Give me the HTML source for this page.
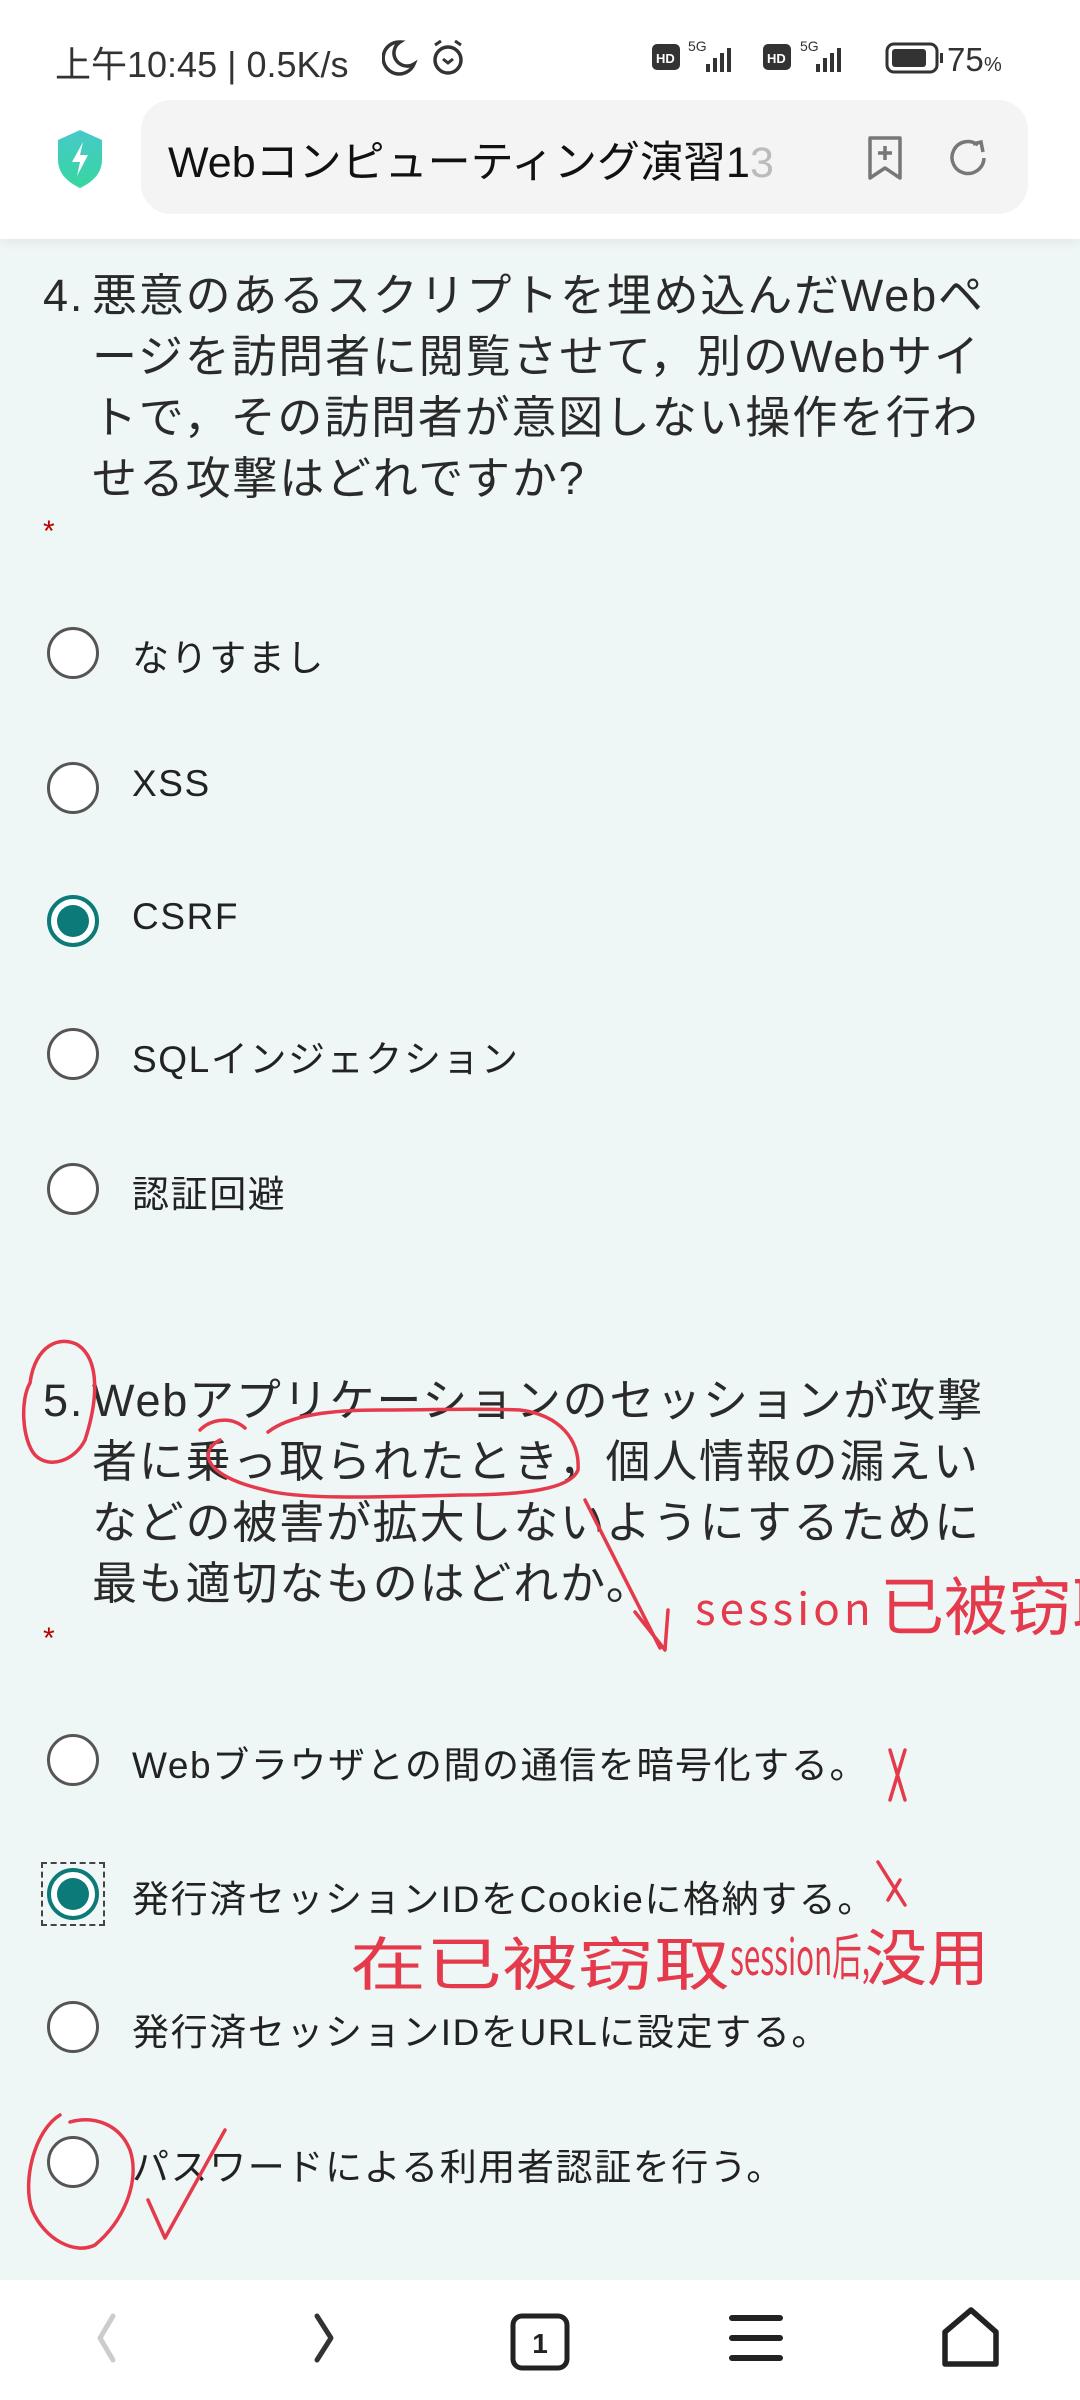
<!DOCTYPE html>
<html><head><meta charset="utf-8">
<style>
*{margin:0;padding:0;box-sizing:border-box}
body{width:1080px;height:2400px;background:#eff6f6;font-family:"Liberation Sans","Noto Sans CJK JP",sans-serif;color:#222;position:relative;overflow:hidden}
.abs{position:absolute;white-space:nowrap}
#hdr{position:absolute;left:0;top:0;width:1080px;height:239px;background:#fff;box-shadow:0 4px 10px rgba(0,0,0,.06)}
.q{font-size:45px;letter-spacing:1.8px;color:#2a2a2a;line-height:61px}
.opt{font-size:37px;color:#222;letter-spacing:1.6px}
.rad{position:absolute;left:47px;width:52px;height:52px;border-radius:50%;border:3px solid #555;background:#fff}
.sel{border:4px solid #0b7a78;background:#fff}
.sel::after{content:"";position:absolute;left:6px;top:6px;width:32px;height:32px;border-radius:50%;background:#0b7a78}
.star{color:#b00;font-size:30px}
#nav{position:absolute;left:0;top:2280px;width:1080px;height:120px;background:#fff}
</style></head><body>
<div id="hdr">
 <div class="abs" style="left:55px;top:36px;font-size:36px;color:#333">上午10:45 | 0.5K/s</div>
 <svg class="abs" style="left:382px;top:38px" width="90" height="40" viewBox="0 0 90 40">
  <path d="M18 4a16 16 0 1 0 14 22A13 13 0 0 1 18 4z" fill="none" stroke="#333" stroke-width="3.5"/>
  <circle cx="66" cy="22" r="13" fill="none" stroke="#333" stroke-width="3.5"/>
  <path d="M61 21l5 4 5-4M53 7l6-4M79 7l-6-4" fill="none" stroke="#333" stroke-width="3"/>
 </svg>
 <svg class="abs" style="left:650px;top:36px" width="370" height="44" viewBox="0 0 370 44">
  <rect x="2" y="8" width="28" height="26" rx="5" fill="#333"/><text x="6" y="27" font-size="13" fill="#fff" font-family="Liberation Sans" font-weight="bold">HD</text>
  <text x="38" y="15" font-size="14" fill="#333" font-family="Liberation Sans">5G</text>
  <rect x="56" y="28" width="4" height="8" fill="#333"/><rect x="63" y="22" width="4" height="14" fill="#333"/><rect x="70" y="17" width="4" height="19" fill="#333"/><rect x="77" y="12" width="4" height="24" fill="#333"/>
  <rect x="113" y="8" width="28" height="26" rx="5" fill="#333"/><text x="117" y="27" font-size="13" fill="#fff" font-family="Liberation Sans" font-weight="bold">HD</text>
  <text x="150" y="15" font-size="14" fill="#333" font-family="Liberation Sans">5G</text>
  <rect x="166" y="28" width="4" height="8" fill="#333"/><rect x="173" y="22" width="4" height="14" fill="#333"/><rect x="180" y="17" width="4" height="19" fill="#333"/><rect x="187" y="12" width="4" height="24" fill="#333"/>
  <rect x="237" y="8" width="50" height="28" rx="7" fill="none" stroke="#333" stroke-width="3"/><rect x="242" y="13" width="34" height="18" rx="3" fill="#333"/><rect x="290" y="17" width="3" height="10" fill="#333"/>
  <text x="297" y="35" font-size="33" fill="#333" font-family="Liberation Sans">75</text><text x="334" y="35" font-size="20" fill="#333" font-family="Liberation Sans">%</text>
 </svg>
 <svg class="abs" style="left:55px;top:128px" width="50" height="62" viewBox="0 0 50 62">
  <defs><linearGradient id="g" x1="0" y1="0" x2="0" y2="1"><stop offset="0" stop-color="#48c9c9"/><stop offset="1" stop-color="#36d6a0"/></linearGradient></defs>
  <path d="M25 2L47 12V32C47 46 36 55 25 60C14 55 3 46 3 32V12Z" fill="url(#g)"/>
  <path d="M28 14L17 34H25L22 48L33 27H25Z" fill="#fff"/>
 </svg>
 <div class="abs" style="left:141px;top:100px;width:887px;height:114px;border-radius:30px;background:#f4f4f4"></div>
 <div class="abs" style="left:168px;top:128px;font-size:43px;color:#111">Webコンピューティング演習1<span style="color:#bbb">3</span></div>
 <svg class="abs" style="left:865px;top:133px" width="40" height="50" viewBox="0 0 40 50">
  <path d="M5 5H35V45L20 35L5 45Z" fill="none" stroke="#777" stroke-width="3.5" stroke-linejoin="round"/>
  <path d="M20 13V27M13 20H27" stroke="#777" stroke-width="3.5"/>
 </svg>
 <svg class="abs" style="left:945px;top:135px" width="46" height="46" viewBox="0 0 46 46">
  <path d="M33 10A16 16 0 1 0 39 23" fill="none" stroke="#777" stroke-width="3.5"/>
  <path d="M28 9L36 7L38 17" fill="none" stroke="#777" stroke-width="3.5"/>
 </svg>
</div>

<div class="abs q" style="left:43px;top:265px">4.</div>
<div class="abs q" style="left:92px;top:265px">悪意のあるスクリプトを埋め込んだWebペ<br>ージを訪問者に閲覧させて，別のWebサイ<br>トで，その訪問者が意図しない操作を行わ<br>せる攻撃はどれですか?</div>
<div class="abs star" style="left:43px;top:515px">*</div>

<div class="rad" style="top:627px"></div><div class="abs opt" style="left:132px;top:628px">なりすまし</div>
<div class="rad" style="top:762px"></div><div class="abs opt" style="left:132px;top:763px">XSS</div>
<div class="rad sel" style="top:895px"></div><div class="abs opt" style="left:132px;top:896px">CSRF</div>
<div class="rad" style="top:1028px"></div><div class="abs opt" style="left:132px;top:1029px">SQLインジェクション</div>
<div class="rad" style="top:1163px"></div><div class="abs opt" style="left:132px;top:1164px">認証回避</div>

<div class="abs q" style="left:43px;top:1370px">5.</div>
<div class="abs q" style="left:92px;top:1370px">Webアプリケーションのセッションが攻撃<br>者に乗っ取られたとき，個人情報の漏えい<br>などの被害が拡大しないようにするために<br>最も適切なものはどれか。</div>
<div class="abs star" style="left:43px;top:1622px">*</div>

<div class="rad" style="top:1734px"></div><div class="abs opt" style="left:132px;top:1735px">Webブラウザとの間の通信を暗号化する。</div>
<div class="abs" style="left:41px;top:1862px;width:64px;height:64px;border:2px dashed #444"></div>
<div class="rad sel" style="top:1868px"></div><div class="abs opt" style="left:132px;top:1869px">発行済セッションIDをCookieに格納する。</div>
<div class="rad" style="top:2001px"></div><div class="abs opt" style="left:132px;top:2002px">発行済セッションIDをURLに設定する。</div>
<div class="rad" style="top:2136px"></div><div class="abs opt" style="left:132px;top:2137px">パスワードによる利用者認証を行う。</div>

<svg class="abs" style="left:0;top:0" width="1080" height="2400" viewBox="0 0 1080 2400">
 <g fill="none" stroke="#e43a4c" stroke-width="3.5" stroke-linecap="round" stroke-linejoin="round">
  <path d="M30 1383C20 1400 22 1440 35 1455C50 1470 75 1460 85 1440C98 1400 100 1360 78 1345C60 1335 35 1345 30 1383"/>
  <path d="M200 1430C210 1420 230 1415 245 1428"/>
  <path d="M268 1432C290 1415 330 1410 380 1410C440 1410 470 1408 520 1410C560 1415 580 1440 578 1470C570 1490 520 1495 460 1495C380 1497 300 1500 265 1490C200 1475 200 1450 220 1440"/>
  <path d="M585 1500L660 1648"/>
  <path d="M635 1612L665 1650L668 1610"/>
  <path d="M890 1750L905 1800M905 1750L890 1800"/>
  <path d="M878 1862L905 1905M900 1880L888 1900"/>
  <path d="M60 2115C35 2130 22 2180 32 2210C45 2240 75 2255 95 2245C125 2220 140 2180 130 2150C120 2125 95 2115 70 2122"/>
  <path d="M148 2200L165 2238L225 2130"/>
 </g>
 <g fill="#e43a4c" font-family="'WenQuanYi Zen Hei','Noto Sans CJK SC',sans-serif">
  <text x="695" y="1625" font-size="44" letter-spacing="4">session</text>
  <text x="880" y="1630" font-size="64">已被窃取</text>
  <text x="350" y="1985" font-size="58" textLength="380" lengthAdjust="spacingAndGlyphs">在已被窃取</text>
  <text x="730" y="1975" font-size="50" textLength="140" lengthAdjust="spacingAndGlyphs">session后,</text>
  <text x="865" y="1980" font-size="62">没用</text>
 </g>
</svg>

<div id="nav">
 <svg class="abs" style="left:0;top:0" width="1080" height="120" viewBox="0 0 1080 120">
  <path d="M113 36L100 58L113 80" fill="none" stroke="#ccc" stroke-width="5" stroke-linecap="round" stroke-linejoin="round"/>
  <path d="M317 36L331 58L317 80" fill="none" stroke="#333" stroke-width="5" stroke-linecap="round" stroke-linejoin="round"/>
  <rect x="513" y="36" width="54" height="52" rx="9" fill="none" stroke="#222" stroke-width="5"/>
  <text x="540" y="73" font-size="28" font-weight="bold" text-anchor="middle" fill="#222" font-family="Liberation Sans">1</text>
  <path d="M732 38H780M732 58H780M732 78H780" stroke="#222" stroke-width="6" stroke-linecap="round"/>
  <path d="M945 84V52L971 30L996 52V84Z" fill="none" stroke="#222" stroke-width="5.5" stroke-linejoin="round"/>
 </svg>
</div>
</body></html>
